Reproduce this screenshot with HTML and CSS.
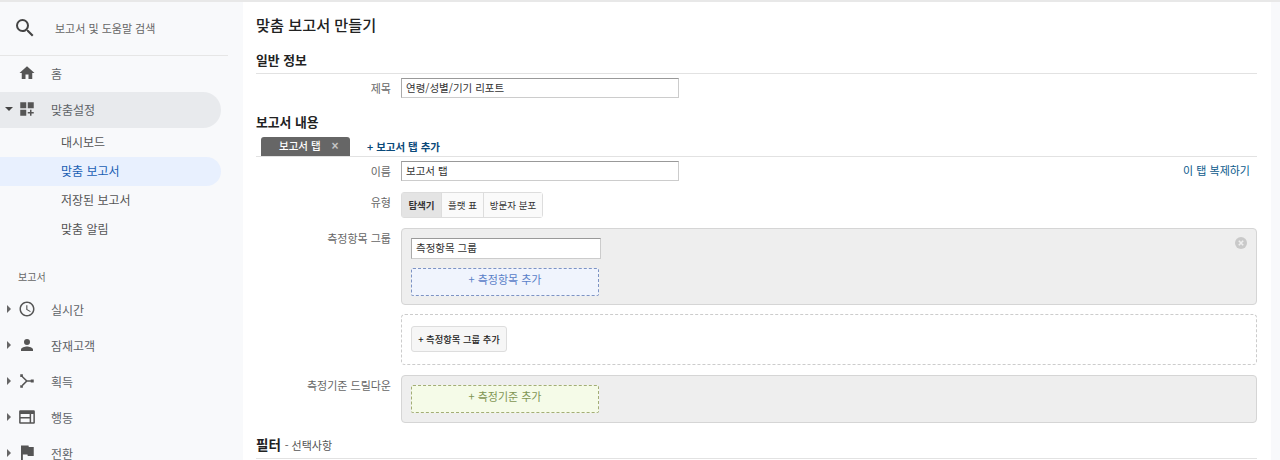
FILE: index.html
```html
<!DOCTYPE html>
<html lang="ko">
<head>
    <meta charset="UTF-8">
    <title>맞춤 보고서 만들기</title>
    <link rel="stylesheet" href="styles.css">
</head>
<body>
    <div class="page">
        <aside class="sidebar">
            <div class="search">
                <svg class="search-icon" viewBox="0 0 24 24"><path d="M15.5 14h-.79l-.28-.27A6.47 6.47 0 0 0 16 9.5 6.5 6.5 0 1 0 9.5 16c1.61 0 3.09-.59 4.23-1.57l.27.28v.79l5 4.99L20.49 19l-4.99-5zm-6 0C7.01 14 5 11.99 5 9.5S7.01 5 9.5 5 14 7.01 14 9.5 11.99 14 9.5 14z"/></svg>
                <span>보고서 및 도움말 검색</span>
            </div>
            <div class="nav-item">
                <span class="caret-space"></span>
                <svg class="nav-icon" viewBox="0 0 24 24"><path d="M10 20v-6h4v6h5v-8h3L12 3 2 12h3v8z"/></svg>
                <span>홈</span>
            </div>
            <div class="nav-item nav-open">
                <span class="caret-down"></span>
                <svg class="nav-icon" viewBox="0 0 24 24"><path d="M3 3h8v8H3zM13 3h8v8h-8zM3 13h8v8H3zM16 13h2v3h3v2h-3v3h-2v-3h-3v-2h3z"/></svg>
                <span>맞춤설정</span>
            </div>
            <div class="sub-item">대시보드</div>
            <div class="sub-item active">맞춤 보고서</div>
            <div class="sub-item">저장된 보고서</div>
            <div class="sub-item">맞춤 알림</div>
            <div class="nav-title">보고서</div>
            <div class="nav-item">
                <span class="caret-right"></span>
                <svg class="nav-icon" viewBox="0 0 24 24"><path d="M11.99 2C6.47 2 2 6.48 2 12s4.47 10 9.99 10C17.52 22 22 17.52 22 12S17.52 2 11.99 2zM12 20c-4.42 0-8-3.58-8-8s3.58-8 8-8 8 3.58 8 8-3.58 8-8 8zm.5-13H11v6l5.25 3.15.75-1.23-4.5-2.67z"/></svg>
                <span>실시간</span>
            </div>
            <div class="nav-item">
                <span class="caret-right"></span>
                <svg class="nav-icon" viewBox="0 0 24 24"><path d="M12 12a4 4 0 1 0 0-8 4 4 0 0 0 0 8zm0 2c-2.67 0-8 1.34-8 4v2h16v-2c0-2.66-5.33-4-8-4z"/></svg>
                <span>잠재고객</span>
            </div>
            <div class="nav-item">
                <span class="caret-right"></span>
                <svg class="nav-icon" viewBox="0 0 24 24"><path d="M3 3h3.500v3.500H3zM3 17.500h3.500V21H3zM17 10h4v4h-4zM6.500 5.500l5.700 5.500H17v2h-4.800l-5.700 5.500-1.300-1.400 5.100-5.100-5.100-5.100z"/></svg>
                <span>획득</span>
            </div>
            <div class="nav-item">
                <span class="caret-right"></span>
                <svg class="nav-icon" viewBox="0 0 24 24"><path d="M3 3h18a1.500 1.500 0 0 1 1.500 1.500v15A1.500 1.500 0 0 1 21 21H3a1.500 1.500 0 0 1-1.500-1.500v-15A1.500 1.500 0 0 1 3 3zm.5 5v11h12v-5h-12v-2h12V8zm14 0v11h3V8z"/></svg>
                <span>행동</span>
            </div>
            <div class="nav-item">
                <span class="caret-right"></span>
                <svg class="nav-icon" viewBox="0 0 24 24"><path d="M14.400 4 14 2H4v20h2.500v-8H12.600l.4 2h8V4z"/></svg>
                <span>전환</span>
            </div>
        </aside>

        <main class="main">
            <h1>맞춤 보고서 만들기</h1>

            <h2 class="section-head">일반 정보</h2>
            <div class="row row-title">
                <label>제목</label>
                <input class="text-input" type="text" value="연령/성별/기기 리포트">
            </div>

            <h2 class="section-head head-content">보고서 내용</h2>
            <div class="tabs">
                <div class="tab">보고서 탭 <span class="tab-close">×</span></div>
                <a class="tab-add">+ 보고서 탭 추가</a>
            </div>
            <div class="row row-name">
                <label>이름</label>
                <input class="text-input" type="text" value="보고서 탭">
                <a class="copy-tab">이 탭 복제하기</a>
            </div>
            <div class="row row-type">
                <label>유형</label>
                <div class="btn-group">
                    <button class="type-btn selected">탐색기</button>
                    <button class="type-btn">플랫 표</button>
                    <button class="type-btn">방문자 분포</button>
                </div>
            </div>
            <div class="row row-metric">
                <label>측정항목 그룹</label>
                <div class="panel panel-metric">
                    <svg class="panel-close" viewBox="0 0 12 12"><circle cx="6" cy="6" r="6" fill="#c9c9c9"/><path d="M3.800 3.800l4.400 4.400M8.200 3.800l-4.400 4.400" stroke="#eee" stroke-width="1.600"/></svg>
                    <input class="text-input group-input" type="text" value="측정항목 그룹">
                    <div class="drop drop-blue">+ 측정항목 추가</div>
                </div>
            </div>
            <div class="row row-group">
                <label></label>
                <div class="group-add">
                    <button class="add-btn">+ 측정항목 그룹 추가</button>
                </div>
            </div>
            <div class="row row-dim">
                <label>측정기준 드릴다운</label>
                <div class="panel panel-dim">
                    <div class="drop drop-green">+ 측정기준 추가</div>
                </div>
            </div>

            <h2 class="section-head head-filter">필터 <span class="optional">- 선택사항</span></h2>
        </main>
    </div>
</body>
</html>
```

FILE: styles.css
```css
* {
    box-sizing: border-box;
}
html, body {
    margin: 0;
    height: 460px;
    overflow: hidden;
}
body {
    font-family: "Noto Sans CJK KR", "Noto Sans", sans-serif;
    background-color: #f8f9fb;
    color: #333;
}
.page {
    display: flex;
    height: 460px;
    border-top: 2px solid #e8e8e8;
}

/* sidebar */
.sidebar {
    width: 243px;
    flex-shrink: 0;
    padding-right: 22px;
    background-color: #f8f9fb;
    font-size: 12px;
    color: #5f6368;
}
.search {
    display: flex;
    align-items: center;
    width: 228px;
    height: 54px;
    padding-left: 13px;
    padding-bottom: 2px;
    border-bottom: 1px solid #e6e6e6;
    font-size: 11px;
    color: #666;
}
.search-icon {
    width: 24px;
    height: 24px;
    margin-right: 18px;
    fill: #444;
}
.nav-item {
    display: flex;
    align-items: center;
    height: 36px;
    padding-bottom: 2px;
}
.nav-icon {
    width: 18px;
    height: 18px;
    margin-right: 15px;
    flex-shrink: 0;
    fill: #555;
}
.caret-space, .caret-down, .caret-right {
    width: 18px;
    flex-shrink: 0;
}
.caret-down::before {
    content: "";
    display: block;
    margin-left: 5px;
    width: 0;
    border-left: 4px solid transparent;
    border-right: 4px solid transparent;
    border-top: 4px solid #444;
}
.caret-right::before {
    content: "";
    display: block;
    margin-left: 7px;
    width: 0;
    border-top: 4px solid transparent;
    border-bottom: 4px solid transparent;
    border-left: 4px solid #666;
}
.nav-open {
    background-color: #e8eaed;
    border-radius: 0 18px 18px 0;
}
.sub-item {
    display: flex;
    align-items: center;
    height: 29px;
    padding-left: 61px;
    padding-bottom: 2px;
    color: #555;
}
.sub-item.active {
    background-color: #e8f0fe;
    border-radius: 0 15px 15px 0;
    color: #1a5fb4;
}
.nav-title {
    margin-top: 25px;
    padding-left: 18px;
    height: 23px;
    font-size: 10px;
    color: #666;
}

/* main */
.main {
    flex: 1;
    margin-right: 9px;
    padding: 0 14px 0 13px;
    background-color: #fff;
    font-size: 11px;
}
h1 {
    margin: 12px 0 0;
    height: 20px;
    font-size: 15.200px;
    line-height: 20px;
    font-weight: 500;
    color: #222;
}
.section-head {
    margin: 0;
    padding-bottom: 4px;
    border-bottom: 1px solid #e2e2e2;
    font-size: 12.800px;
    line-height: 18px;
    font-weight: 700;
    color: #222;
}
h1 + .section-head {
    margin-top: 17px;
}
.head-content {
    margin-top: 15px;
    border-bottom: none;
    padding-bottom: 0;
}
.row {
    display: flex;
    align-items: flex-start;
}
.row label {
    width: 135px;
    margin-right: 10px;
    padding-top: 1px;
    flex-shrink: 0;
    text-align: right;
    font-size: 11px;
    line-height: 18px;
    color: #666;
}
.row-title {
    margin-top: 4px;
}
.text-input {
    width: 278px;
    height: 20px;
    padding: 0 4px 2px;
    border: 1px solid #ccc;
    border-top-color: #999;
    border-left-color: #aaa;
    font-family: inherit;
    font-size: 10.500px;
    color: #333;
    background-color: #fff;
}
.tabs {
    display: flex;
    align-items: flex-end;
    height: 26px;
    padding-left: 5px;
    border-bottom: 1px solid #e2e2e2;
}
.tab {
    width: 89px;
    height: 19px;
    padding-left: 18px;
    border-radius: 3px 3px 0 0;
    background-color: #666;
    color: #fff;
    font-size: 10.500px;
    line-height: 18px;
    font-weight: 500;
}
.tab-close {
    margin-left: 8px;
    color: #c4c4c4;
    font-family: "Liberation Sans", sans-serif;
    font-size: 12px;
    line-height: 12px;
    font-weight: 700;
}
.tab-add {
    margin-left: 17px;
    font-size: 10.500px;
    line-height: 19px;
    font-weight: 700;
    color: #0b4a7a;
}
.row-name {
    margin-top: 4px;
}
.copy-tab {
    margin-left: auto;
    margin-right: 7px;
    font-size: 11px;
    line-height: 18px;
    color: #0b5a8c;
}
.row-type {
    margin-top: 11px;
}
.btn-group {
    display: flex;
    height: 26px;
    border: 1px solid #ddd;
    border-radius: 3px;
}
.type-btn {
    height: 24px;
    padding: 0;
    border: none;
    border-right: 1px solid #ddd;
    background-color: #fafafa;
    font-family: inherit;
    font-size: 9.500px;
    color: #333;
}
.type-btn:nth-child(1) {
    width: 40px;
}
.type-btn:nth-child(2) {
    width: 42px;
}
.type-btn:nth-child(3) {
    width: 58px;
    border-right: none;
}
.type-btn.selected {
    background-color: #e4e4e4;
    font-weight: 700;
}
.row-metric {
    margin-top: 10px;
}
.panel {
    position: relative;
    flex: 1;
    padding: 9px;
    border: 1px solid #d5d5d5;
    border-radius: 4px;
    background-color: #eee;
}
.panel-metric {
    height: 77px;
}
.panel-close {
    position: absolute;
    top: 8px;
    right: 9px;
    width: 12px;
    height: 12px;
}
.group-input {
    display: block;
    width: 190px;
    height: 21px;
}
.drop {
    width: 188px;
    height: 28px;
    border-radius: 2px;
    text-align: center;
    font-size: 11px;
    line-height: 20px;
}
.drop-blue {
    margin-top: 9px;
    border: 1px dashed #7d93c4;
    background-color: #f0f4fd;
    color: #5a80c8;
}
.drop-green {
    border: 1px dashed #a3ad76;
    background-color: #f5fbe8;
    color: #7f9553;
}
.row-group {
    margin-top: 9px;
}
.group-add {
    flex: 1;
    height: 51px;
    padding: 11px 9px;
    border: 1px dashed #ccc;
    border-radius: 4px;
    background-color: #fff;
}
.add-btn {
    width: 96px;
    height: 26px;
    padding: 0;
    border: 1px solid #ddd;
    border-radius: 3px;
    background-color: #f6f6f6;
    font-family: inherit;
    font-size: 9.300px;
    font-weight: 500;
    color: #222;
}
.row-dim {
    margin-top: 10px;
}
.panel-dim {
    height: 48px;
}
.head-filter {
    margin-top: 12px;
    padding-bottom: 4px;
    font-size: 13.500px;
}
.optional {
    font-size: 11px;
    font-weight: 400;
    color: #555;
}
```
